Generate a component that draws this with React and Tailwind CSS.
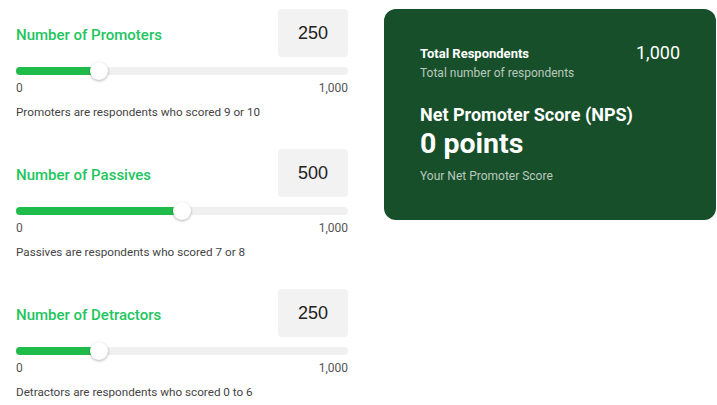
import { useState } from "react";

const Slider = ({ label, value, onChange, note }) => {
  const pct = (value / 1000) * 100;
  return (
    <div className="flex flex-col">
      <div className="flex items-center justify-between h-12">
        <span className="pt-1 text-[15px] font-medium text-[#22c55e]">{label}</span>
        <div className="w-[70px] h-12 rounded bg-[#f2f2f2] flex items-center justify-center text-[18px] text-[#222] font-['Liberation_Sans',sans-serif]">
          {value}
        </div>
      </div>
      <div
        className="relative mt-[10px] h-2 rounded-full bg-[#f0f0f0]"
        onClick={(e) => {
          const r = e.currentTarget.getBoundingClientRect();
          onChange(Math.round(((e.clientX - r.left) / r.width) * 1000));
        }}
      >
        <div className="h-2 rounded-full bg-[#1fbb4b]" style={{ width: pct + "%" }}></div>
        <div
          className="absolute top-1/2 w-[18px] h-[18px] -mt-[9px] -ml-[9px] rounded-full bg-white shadow-[0_1px_3px_rgba(0,0,0,0.3)]"
          style={{ left: pct + "%" }}
        ></div>
      </div>
      <div className="flex justify-between mt-[5px] text-xs leading-4 text-[#555]">
        <span>0</span>
        <span>1,000</span>
      </div>
      <p className="mt-2 text-[11.7px] leading-4 text-[#444]">{note}</p>
    </div>
  );
};

export default function App() {
  const [promoters, setPromoters] = useState(250);
  const [passives, setPassives] = useState(500);
  const [detractors, setDetractors] = useState(250);

  const total = promoters + passives + detractors;
  const nps = total ? Math.round(((promoters - detractors) / total) * 100) : 0;

  return (
    <div className="flex gap-9 pl-4 pt-[9px] bg-white min-h-screen font-['Roboto',sans-serif]">
      <div className="w-[332px] shrink-0 flex flex-col gap-[29px]">
        <Slider
          label="Number of Promoters"
          value={promoters}
          onChange={setPromoters}
          note="Promoters are respondents who scored 9 or 10"
        />
        <Slider
          label="Number of Passives"
          value={passives}
          onChange={setPassives}
          note="Passives are respondents who scored 7 or 8"
        />
        <Slider
          label="Number of Detractors"
          value={detractors}
          onChange={setDetractors}
          note="Detractors are respondents who scored 0 to 6"
        />
      </div>
      <div className="w-[332px] shrink-0 self-start rounded-xl bg-[#174f2a] p-9 text-white">
        <div className="flex justify-between">
          <div>
            <div className="text-[13px] leading-[18px] font-bold">Total Respondents</div>
            <div className="text-xs leading-4 mt-[2px] text-[#b9c9bd]">Total number of respondents</div>
          </div>
          <div className="text-[18px] leading-[18px] -mt-[1px]">{total.toLocaleString("en-US")}</div>
        </div>
        <div className="mt-[22px] text-[18px] leading-6 font-bold">Net Promoter Score (NPS)</div>
        <div className="text-[28.5px] leading-[34px] font-bold">{nps} points</div>
        <div className="mt-[7px] text-xs leading-4 text-[#b9c9bd]">Your Net Promoter Score</div>
      </div>
    </div>
  );
}
